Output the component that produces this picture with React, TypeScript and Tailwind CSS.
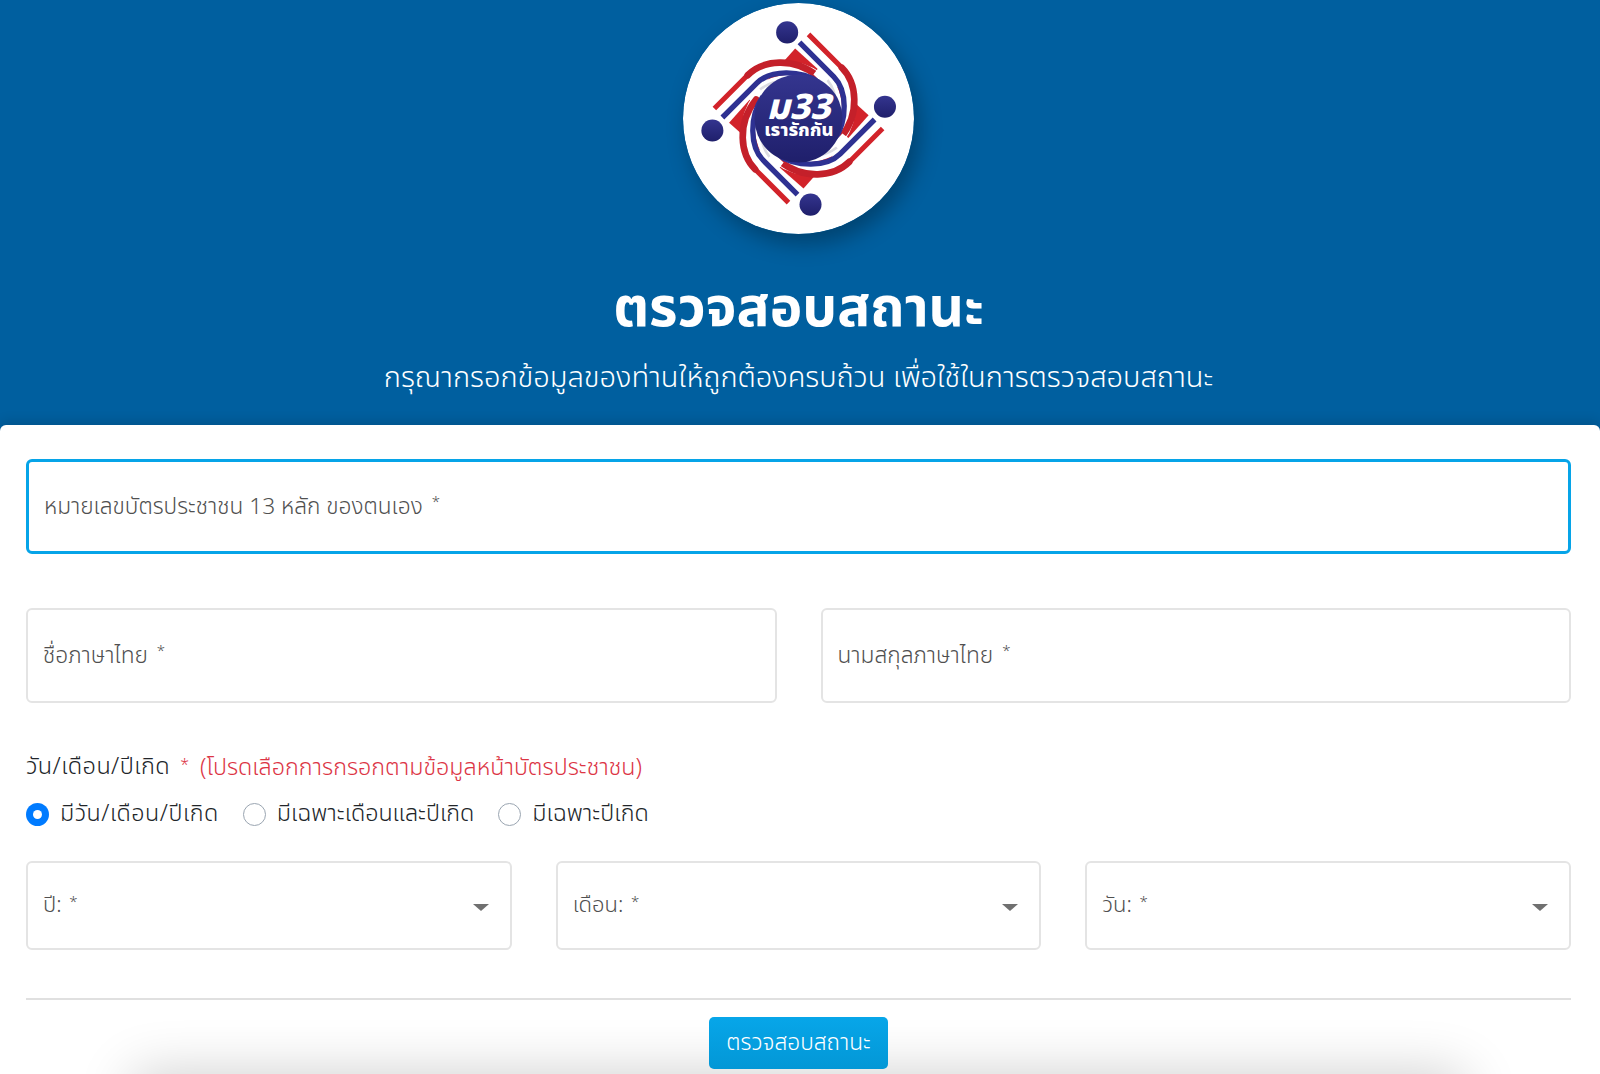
const FONT = "font-['Noto_Sans_Thai','Noto_Sans','Open_Sans',sans-serif]";

function LogoArm({ angle }: { angle: number }) {
  return (
    <g transform={`rotate(${angle} 415 355)`}>
      {/* white swoosh that hugs the ball */}
      <path d="M270 300 C320 235 410 225 480 262" fill="none" stroke="#ffffff" strokeWidth="34" />
      <path d="M300 268 C340 236 410 232 470 262" fill="none" stroke="#dcdce2" strokeWidth="8" />
      {/* stripe band: white, red, blue */}
      <path d="M176 337 L277 236 C320 193 410 188 476 236" fill="none" stroke="#ffffff" strokeWidth="38" />
      <path d="M163 325 L263 225 C308 180 400 170 472 228" fill="none" stroke="#d2232a" strokeWidth="15" />
      <path d="M263 225 C308 180 400 170 472 228" fill="none" stroke="#c4202a" strokeWidth="20" strokeLinecap="round" />
      <path d="M187 352 L290 249 C330 209 420 207 480 248" fill="none" stroke="#2e3192" strokeWidth="16" />
    </g>
  );
}

function Logo() {
  return (
    <svg viewBox="69 9 692 692" className="w-[231px] h-[231px] rounded-full">
      <defs>
        <linearGradient id="ballFill" x1="0" y1="0" x2="0" y2="1">
          <stop offset="0" stopColor="#34358f" />
          <stop offset="1" stopColor="#1f1f6b" />
        </linearGradient>
      </defs>
      <circle cx="415" cy="355" r="346" fill="#ffffff" />
      <polygon points="405,145 625,345 430,565 207,368" fill="#d2232a" />
      {[0, 90, 180, 270].map((a) => (
        <LogoArm key={a} angle={a} />
      ))}
      <circle cx="415" cy="355" r="132" fill="url(#ballFill)" />
      {[
        [381, 97],
        [157, 391],
        [674, 320],
        [451, 613],
      ].map(([x, y]) => (
        <circle key={x} cx={x} cy={y} r="33" fill="url(#ballFill)" />
      ))}
      <text x="415" y="358" textAnchor="middle" fill="#ffffff" fontSize="106" fontWeight="800" fontStyle="italic" fontFamily="Noto Sans Thai, Noto Sans, sans-serif">
        ม33
      </text>
      <text x="416" y="408" textAnchor="middle" fill="#ffffff" fontSize="55" fontWeight="800" fontFamily="Noto Sans Thai, Noto Sans, sans-serif">
        เรารักกัน
      </text>
    </svg>
  );
}

function Field({ label, focused }: { label: string; focused?: boolean }) {
  return (
    <div
      className={`flex items-center flex-1 h-[95px] bg-white rounded-[6px] px-[15px] pt-[2px] text-[22.7px] font-light text-[#505050] ${
        focused ? "border-[3px] border-[#06a4e8]" : "border-2 border-[#e4e4e4]"
      }`}
    >
      {label}
      <span className="ml-[9px] -mt-[8px] text-[15px]">*</span>
    </div>
  );
}

function SelectBox({ label }: { label: string }) {
  return (
    <div className="flex items-center justify-between flex-1 h-[89px] bg-white border-2 border-[#e4e4e4] rounded-[6px] pl-[15px] pr-[21px] text-[22px] font-light text-[#505050]">
      <span>
        {label} <span className="ml-[2px] text-[15px] align-[5px]">*</span>
      </span>
      <span className="w-0 h-0 mt-[4px] border-x-[8px] border-x-transparent border-t-[7px] border-t-[#707070]" />
    </div>
  );
}

function Radio({ label, checked }: { label: string; checked?: boolean }) {
  return (
    <label className="flex items-center gap-[11px] text-[23.3px] font-light text-[#212529]">
      {checked ? (
        <span className="flex items-center justify-center w-[23px] h-[23px] rounded-full bg-[#007bff]">
          <span className="w-[9px] h-[9px] rounded-full bg-white" />
        </span>
      ) : (
        <span className="w-[23px] h-[23px] rounded-full border border-[#9aa5b1] bg-white" />
      )}
      <span className={checked ? "tracking-[0.5px]" : ""}>{label}</span>
    </label>
  );
}

export default function App() {
  return (
    <div className={`h-[1074px] overflow-hidden bg-[#005f9f] ${FONT}`}>
      {/* Header */}
      <header className="h-[425px] flex flex-col items-center pt-[3px] pr-[3px] text-white">
        <div className="rounded-full shadow-[6px_10px_22px_rgba(0,0,0,0.3)]">
          <Logo />
        </div>
        <h1 className="mt-[41px] text-[55px] leading-[70px] font-bold">ตรวจสอบสถานะ</h1>
        <p className="mt-[13px] text-[29px] leading-[40px] font-light">
          กรุณากรอกข้อมูลของท่านให้ถูกต้องครบถ้วน เพื่อใช้ในการตรวจสอบสถานะ
        </p>
      </header>

      {/* Form card */}
      <main className="bg-white rounded-t-[6px] h-[649px] pl-[26px] pr-[29px] pt-[34px] overflow-hidden shadow-[0_-4px_12px_rgba(0,0,0,0.12)]">
        <Field label="หมายเลขบัตรประชาชน 13 หลัก ของตนเอง" focused />

        <div className="flex gap-[44px] mt-[54px]">
          <Field label="ชื่อภาษาไทย" />
          <Field label="นามสกุลภาษาไทย" />
        </div>

        <div className="mt-[47px] h-[36px] flex items-center text-[23.5px] font-light text-[#212529]">
          <span className="tracking-[0.4px]">วัน/เดือน/ปีเกิด</span>
          <span className="ml-[10px] text-[16px] -mt-[6px] text-[#dc3545]">*</span>
          <span className="ml-[11px] text-[23.3px] text-[#dc3545]">(โปรดเลือกการกรอกตามข้อมูลหน้าบัตรประชาชน)</span>
        </div>

        <div className="flex gap-[24px] mt-[10px] h-[36px]">
          <Radio label="มีวัน/เดือน/ปีเกิด" checked />
          <Radio label="มีเฉพาะเดือนและปีเกิด" />
          <Radio label="มีเฉพาะปีเกิด" />
        </div>

        <div className="flex gap-[44px] mt-[29px]">
          <SelectBox label="ปี:" />
          <SelectBox label="เดือน:" />
          <SelectBox label="วัน:" />
        </div>

        <hr className="mt-[48px] border-t-2 border-[#e0e0e0]" />

        <div className="relative z-10 flex justify-center mt-[17px]">
          <button className="w-[179px] h-[52px] rounded-[5px] bg-gradient-to-b from-[#07a6e9] to-[#0397d6] text-white text-[22.7px] font-light">
            ตรวจสอบสถานะ
          </button>
        </div>

        {/* bottom shadow from the next section, just off the screen */}
        <div className="mx-[107px] mt-[5px] h-[60px] bg-white shadow-[0_0_55px_rgba(0,0,0,0.2)]" />
      </main>
    </div>
  );
}
